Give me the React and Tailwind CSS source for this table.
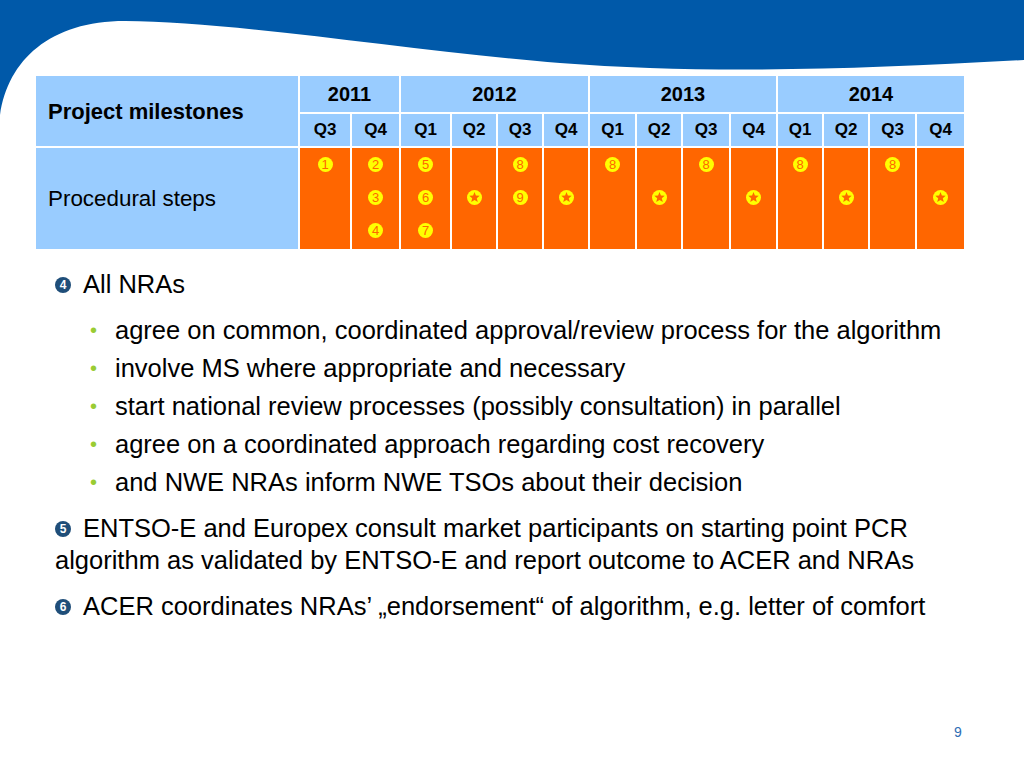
import React from 'react';

const font = { fontFamily: '"Liberation Sans", Arial, sans-serif' };

// body cells of the milestones table, three slots per quarter
const cells = [
  ['1', null, null],
  ['2', '3', '4'],
  ['5', '6', '7'],
  [null, 'star', null],
  ['8', '9', null],
  [null, 'star', null],
  ['8', null, null],
  [null, 'star', null],
  ['8', null, null],
  [null, 'star', null],
  ['8', null, null],
  [null, 'star', null],
  ['8', null, null],
  [null, 'star', null],
];

const quarters = ['Q3', 'Q4', 'Q1', 'Q2', 'Q3', 'Q4', 'Q1', 'Q2', 'Q3', 'Q4', 'Q1', 'Q2', 'Q3', 'Q4'];

function Wave() {
  return (
    <svg className="absolute top-0 left-0" width="1024" height="120" viewBox="0 0 1024 120">
      <rect x="0" y="0" width="1024" height="120" fill="#0059a9" />
      <path
        d="M0,120 L0,115 C8,60 50,21 125,21 C230,21 420,52 560,63 C700,74 850,70 1024,60 L1024,120 Z"
        fill="#ffffff"
      />
    </svg>
  );
}

function Mark({ value }) {
  if (value === 'star') {
    return (
      <svg width="15" height="15" viewBox="0 0 15 15">
        <circle cx="7.5" cy="7.5" r="7.5" fill="#ffff00" />
        <polygon
          points="7.5,2 8.9,5.6 12.7,5.8 9.8,8.2 10.8,12 7.5,9.9 4.2,12 5.2,8.2 2.3,5.8 6.1,5.6"
          fill="#ff6600"
        />
      </svg>
    );
  }
  return (
    <span className="flex items-center justify-center w-[15px] h-[15px] rounded-full bg-[#ffff00] text-[#ff6600] text-[13px] leading-none">
      {value}
    </span>
  );
}

function Dot({ n }) {
  return (
    <span className="inline-flex items-center justify-center w-[16px] h-[16px] rounded-full bg-[#1f4e79] text-white text-[12px] font-bold leading-none align-[4px] mr-[12px]">
      {n}
    </span>
  );
}

function Table() {
  return (
    <div className="ml-[36px] w-[928px] grid gap-[2px] grid-cols-[262px_50px_47px_49px_44px_44px_44px_45px_44px_46px_45px_44px_44px_45px_47px] grid-rows-[36px_32px_101px]">
      <div className="row-span-2 bg-[#99ccff] flex items-center pl-[12px] text-[22px] font-bold text-black">
        Project milestones
      </div>
      <div className="col-span-2 bg-[#99ccff] flex items-center justify-center text-[20px] font-bold">2011</div>
      <div className="col-span-4 bg-[#99ccff] flex items-center justify-center text-[20px] font-bold">2012</div>
      <div className="col-span-4 bg-[#99ccff] flex items-center justify-center text-[20px] font-bold">2013</div>
      <div className="col-span-4 bg-[#99ccff] flex items-center justify-center text-[20px] font-bold">2014</div>
      {quarters.map((q, i) => (
        <div key={i} className="bg-[#99ccff] flex items-center justify-center text-[17px] font-bold">
          {q}
        </div>
      ))}
      <div className="bg-[#99ccff] flex items-center pl-[12px] text-[22.4px] text-black">Procedural steps</div>
      {cells.map((c, i) => (
        <div key={i} className="bg-[#ff6600] flex flex-col">
          {c.map((v, j) => (
            <div key={j} className="h-[33px] flex items-center justify-center">
              {v && <Mark value={v} />}
            </div>
          ))}
        </div>
      ))}
    </div>
  );
}

export default function App() {
  const bullets = [
    'agree on common, coordinated approval/review process for the algorithm',
    'involve MS where appropriate and necessary',
    'start national review processes (possibly consultation) in parallel',
    'agree on a coordinated approach regarding cost recovery',
    'and NWE NRAs inform NWE TSOs about their decision',
  ];
  return (
    <div className="relative w-[1024px] h-[768px] bg-white overflow-hidden text-black" style={font}>
      <Wave />
      <div className="relative pt-[76px]">
        <Table />
        <div className="pl-[55px] text-[25.5px]">
          <div className="mt-[19px] leading-[32px]">
            <Dot n="4" />All NRAs
          </div>
          <ul className="mt-[11px] pl-[35px]">
            {bullets.map((b, i) => (
              <li key={i} className="flex leading-[38px]">
                <span className="w-[25px] text-[#99cc33] text-[20px]">•</span>
                <span>{b}</span>
              </li>
            ))}
          </ul>
          <p className="mt-[11px] leading-[32px]">
            <Dot n="5" />ENTSO-E and Europex consult market participants on starting point PCR
            <br />
            algorithm as validated by ENTSO-E and report outcome to ACER and NRAs
          </p>
          <p className="mt-[14px] leading-[32px]">
            <Dot n="6" />ACER coordinates NRAs’ „endorsement“ of algorithm, e.g. letter of comfort
          </p>
        </div>
      </div>
      <div className="absolute left-[954px] top-[722px] text-[14px] text-[#2e6db4]">9</div>
    </div>
  );
}
